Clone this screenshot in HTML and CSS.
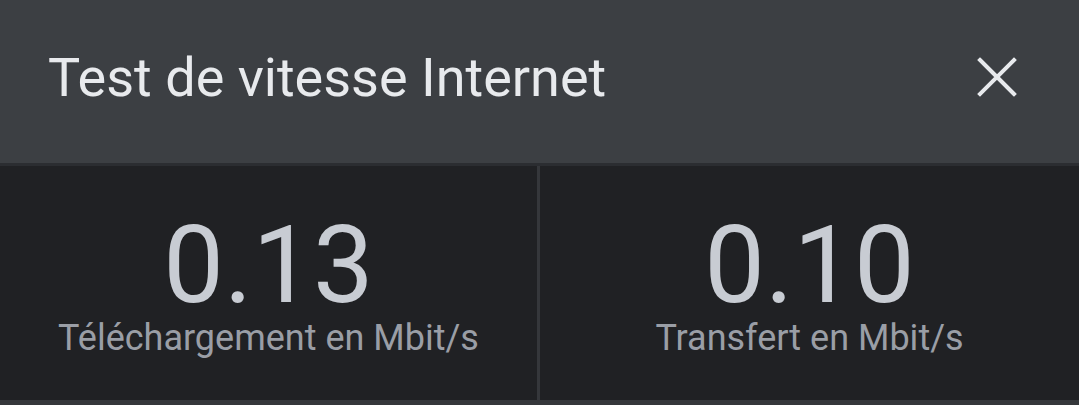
FILE: index.html
```html
<!DOCTYPE html>
<html lang="fr">
<head>
    <meta charset="UTF-8">
    <meta name="viewport" content="width=device-width, initial-scale=1.0">
    <title>Test de vitesse Internet</title>
    <link rel="stylesheet" href="styles.css">
</head>
<body>
    <!-- En-tête -->
    <div class="header">
        <h1 class="title">Test de vitesse Internet</h1>
        <button class="close" aria-label="Fermer">
            <svg width="40" height="40" viewBox="0 0 40 40">
                <path d="M3 3 L37 37 M37 3 L3 37" stroke="#e8eaed" stroke-width="4" stroke-linecap="square" fill="none"/>
            </svg>
        </button>
    </div>

    <!-- Résultats -->
    <div class="results">
        <div class="result">
            <div class="value">0.13</div>
            <div class="label">Téléchargement en Mbit/s</div>
        </div>
        <div class="result">
            <div class="value">0.10</div>
            <div class="label">Transfert en Mbit/s</div>
        </div>
    </div>
</body>
</html>
```

FILE: styles.css
```css
body {
    margin: 0;
    font-family: Roboto, "Noto Sans", sans-serif;
    background-color: #202124;
    width: 1079px;
    height: 405px;
    overflow: hidden;
}
.header {
    height: 166px;
    background-color: #3c3f43;
    border-bottom: 3px solid #2b2d31;
    display: flex;
    align-items: center;
    justify-content: space-between;
    padding: 0 62px 9px 48px;
    box-sizing: border-box;
}
.title {
    margin: 0;
    font-size: 54px;
    font-weight: 400;
    color: #e8eaed;
}
.close {
    background: none;
    border: none;
    padding: 0;
    width: 40px;
    height: 40px;
    cursor: pointer;
}
.results {
    display: grid;
    grid-template-columns: 540px 1fr;
    height: 234px;
    border-bottom: 5px solid #35373b;
}
.result {
    display: flex;
    flex-direction: column;
    align-items: center;
    padding-top: 49px;
}
.result:first-child {
    border-right: 3px solid #35373b;
}
.value {
    font-size: 108px;
    line-height: 100px;
    color: #c8ccd3;
}
.label {
    font-size: 36px;
    color: #9a9ea6;
    margin-top: 2px;
}
```
